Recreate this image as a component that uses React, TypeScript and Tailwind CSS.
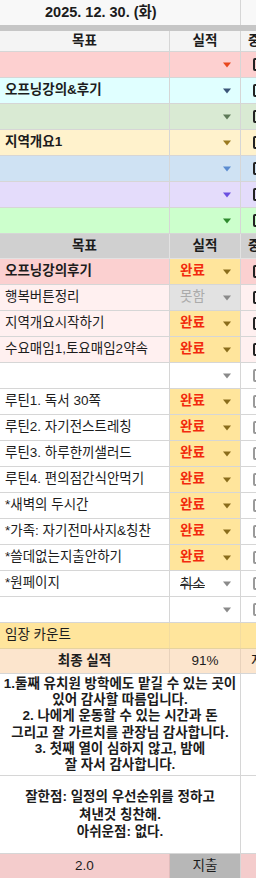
import React from 'react';

type TopRow = { bg: string; arrow: string; text?: string };
type Task = { text: string; bold?: boolean; bg: string; status: '' | '완료' | '못함' | '취소'; dark?: boolean };

const topRows: TopRow[] = [
  { bg: 'bg-[#fdd0d0]', arrow: 'border-t-[#e8471c]' },
  { bg: 'bg-[#e0ffff]', arrow: 'border-t-[#3b5578]', text: '오프닝강의&후기' },
  { bg: 'bg-[#d9ead3]', arrow: 'border-t-[#5e7a58]' },
  { bg: 'bg-[#fff2cc]', arrow: 'border-t-[#9a7a20]', text: '지역개요1' },
  { bg: 'bg-[#cfe2f3]', arrow: 'border-t-[#5b8bd0]' },
  { bg: 'bg-[#e4dcfb]', arrow: 'border-t-[#6a4fe0]' },
  { bg: 'bg-[#ccffcc]', arrow: 'border-t-[#2e8a2e]' },
];

const tasks: Task[] = [
  { text: '오프닝강의후기', bold: true, bg: 'bg-[#fbd0d0]', status: '완료', dark: true },
  { text: '행복버튼정리', bg: 'bg-[#fff0f0]', status: '못함', dark: true },
  { text: '지역개요시작하기', bg: 'bg-[#fff0f0]', status: '완료', dark: true },
  { text: '수요매임1,토요매임2약속', bg: 'bg-[#fff0f0]', status: '완료', dark: true },
  { text: '', bg: 'bg-white', status: '' },
  { text: '루틴1. 독서 30쪽', bg: 'bg-white', status: '완료' },
  { text: '루틴2. 자기전스트레칭', bg: 'bg-white', status: '완료' },
  { text: '루틴3. 하루한끼샐러드', bg: 'bg-white', status: '완료' },
  { text: '루틴4. 편의점간식안먹기', bg: 'bg-white', status: '완료' },
  { text: '*새벽의 두시간', bg: 'bg-white', status: '완료' },
  { text: '*가족: 자기전마사지&칭찬', bg: 'bg-white', status: '완료' },
  { text: '*쓸데없는지출안하기', bg: 'bg-white', status: '완료' },
  { text: '*원페이지', bg: 'bg-white', status: '취소' },
  { text: '', bg: 'bg-white', status: '' },
];

const Arrow = ({ color }: { color: string }) => (
  <span className={`absolute right-[9px] top-1/2 -translate-y-1/2 w-0 h-0 border-l-[4.5px] border-r-[4.5px] border-t-[5px] border-l-transparent border-r-transparent ${color}`} />
);

const Box = ({ dark }: { dark?: boolean }) => (
  <div className={`ml-[12px] w-[14px] h-[13px] shrink-0 rounded-[2px] border-2 ${dark ? 'border-[#222]' : 'border-[#9a9a9a]'}`} />
);

const StatusCell = ({ status }: { status: Task['status'] }) => {
  if (status === '완료')
    return (
      <div className="relative w-[71px] h-full border-r border-[#d6d6d6] bg-[#ffe59c] flex items-center pl-[10px]">
        <span className="font-bold text-[#f2290d]">완료</span>
        <Arrow color="border-t-[#8a6d1c]" />
      </div>
    );
  if (status === '못함')
    return (
      <div className="relative w-[71px] h-full border-r border-[#d6d6d6] bg-[#e2e2e2] flex items-center pl-[10px]">
        <span className="text-[#ababab]">못함</span>
        <Arrow color="border-t-[#8a8a8a]" />
      </div>
    );
  if (status === '취소')
    return (
      <div className="relative w-[71px] h-full border-r border-[#d6d6d6] flex items-center pl-[10px]">
        <div className="relative text-[#222] leading-[18px]">
          취소
          {/* strike line */}
          <div className="absolute left-0 right-0 top-[10px] h-[1.5px] bg-[#333]" />
        </div>
        <Arrow color="border-t-[#8a8a8a]" />
      </div>
    );
  return (
    <div className="relative w-[71px] h-full border-r border-[#d6d6d6]">
      <Arrow color="border-t-[#8a8a8a]" />
    </div>
  );
};

export default function App() {
  return (
    <div className="w-[256px] h-[878px] overflow-hidden bg-white text-[13.5px] text-[#1c1c1c] font-['Liberation_Sans','Noto_Sans_CJK_KR',sans-serif]">
      {/* date title */}
      <div className="flex h-[25px] bg-[#f8f8f8]">
        <div className="w-[241px] border-r border-[#d6d6d6] flex items-center pl-[45px] font-bold text-[14.5px]">2025. 12. 30. (화)</div>
      </div>
      <div className="h-[6px] bg-[#c6c6c6]" />

      {/* header */}
      <div className="flex h-[21px] bg-[#f4f4f4] border-b border-[#d6d6d6] font-bold">
        <div className="w-[170px] border-r border-[#d6d6d6] flex items-center justify-center">목표</div>
        <div className="w-[71px] border-r border-[#d6d6d6] flex items-center justify-center">실적</div>
        <div className="flex-1 overflow-hidden flex items-center pl-[7px] whitespace-nowrap">중</div>
      </div>

      {topRows.map((r, i) => (
        <div key={i} className={`flex h-[26px] border-b border-[#d6d6d6] ${r.bg}`}>
          <div className="w-[170px] border-r border-[#d6d6d6] flex items-center pl-[5px] font-bold">{r.text}</div>
          <div className="relative w-[71px] border-r border-[#d6d6d6]">
            <Arrow color={r.arrow} />
          </div>
          <div className="flex-1 overflow-hidden flex items-center">
            <Box dark />
          </div>
        </div>
      ))}

      {/* second header */}
      <div className="flex h-[25px] bg-[#d0d0d0] border-b border-[#e2e2e2] font-bold">
        <div className="w-[170px] border-r border-[#e2e2e2] flex items-center justify-center">목표</div>
        <div className="w-[71px] border-r border-[#e2e2e2] flex items-center justify-center">실적</div>
        <div className="flex-1 overflow-hidden flex items-center pl-[7px] whitespace-nowrap">중</div>
      </div>

      {tasks.map((t, i) => (
        <div key={i} className={`flex h-[26px] border-b border-[#d6d6d6] ${t.bg}`}>
          <div className={`w-[170px] border-r border-[#d6d6d6] flex items-center pl-[5px] whitespace-nowrap overflow-hidden ${t.bold ? 'font-bold' : ''}`}>
            {t.text}
          </div>
          <StatusCell status={t.status} />
          <div className="flex-1 overflow-hidden flex items-center">
            <Box dark={t.dark} />
          </div>
        </div>
      ))}

      {/* summary rows */}
      <div className="flex h-[26px] bg-[#ffe59c] border-b border-[#e6d3a0]">
        <div className="w-[170px] border-r border-[#f3dca0] flex items-center pl-[5px]">임장 카운트</div>
        <div className="w-[71px] border-r border-[#f3dca0]" />
        <div className="flex-1" />
      </div>
      <div className="flex h-[25px] bg-[#fce5cd] border-b border-[#d6d6d6]">
        <div className="w-[170px] border-r border-[#e8d2bc] flex items-center justify-center font-bold">최종 실적</div>
        <div className="w-[71px] border-r border-[#e8d2bc] flex items-center justify-center">91%</div>
        <div className="flex-1 overflow-hidden flex items-center pl-[10px] whitespace-nowrap">저</div>
      </div>

      {/* gratitude notes */}
      <div className="flex h-[102px] border-b border-[#d6d6d6]">
        <div className="w-[241px] border-r border-[#d6d6d6] flex flex-col items-center justify-center text-center font-bold text-[13.5px] leading-[16.3px] whitespace-nowrap">
          <p>1.둘째 유치원 방학에도 맡길 수 있는 곳이</p>
          <p>있어 감사할 따름입니다.</p>
          <p>2. 나에게 운동할 수 있는 시간과 돈</p>
          <p>그리고 잘 가르치를 관장님 감사합니다.</p>
          <p>3. 첫째 열이 심하지 않고, 밤에</p>
          <p>잘 자서 감사합니다.</p>
        </div>
        <div className="flex-1" />
      </div>
      <div className="flex h-[78px] border-b border-[#d6d6d6]">
        <div className="w-[241px] border-r border-[#d6d6d6] flex flex-col items-center justify-center text-center font-bold text-[13.5px] leading-[17.5px]">
          <p>잘한점: 일정의 우선순위를 정하고</p>
          <p>쳐낸것 칭찬해.</p>
          <p>아쉬운점: 없다.</p>
        </div>
        <div className="flex-1" />
      </div>

      {/* footer */}
      <div className="flex h-[25px]">
        <div className="w-[170px] bg-[#f4cccc] border-r border-[#e0bcbc] flex items-center justify-center">2.0</div>
        <div className="w-[71px] bg-[#b7b7b7] border-r border-[#d6d6d6] flex items-center justify-center">지출</div>
        <div className="flex-1 bg-[#f4cccc]" />
      </div>
    </div>
  );
}
